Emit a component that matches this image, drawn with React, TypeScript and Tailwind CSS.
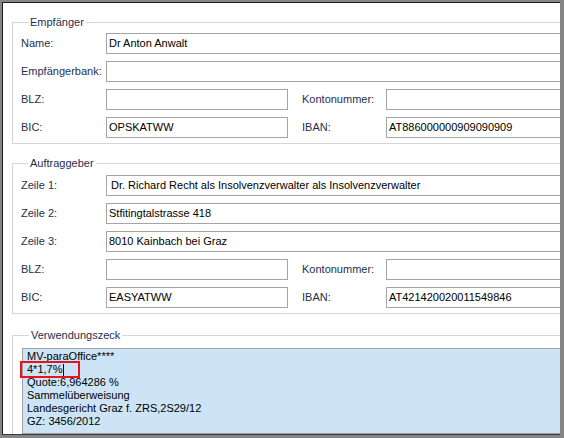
import React from "react";

const LABEL = "text-[#1e2f4d]";
const FONT = { fontFamily: "Tahoma, 'Liberation Sans', 'DejaVu Sans', sans-serif" };

function Box({ value = "", wide = false, lead = false }: { value?: string; wide?: boolean; lead?: boolean }) {
  return (
    <div
      className={`h-[21px] border border-[#a5a5a5] bg-white flex items-center text-black whitespace-nowrap overflow-hidden ${
        lead ? "pl-[4px]" : "pl-[2px]"
      } ${wide ? "flex-1" : "w-[182px]"}`}
    >
      {value}
    </div>
  );
}

function Row({ label, value, lead }: { label: string; value?: string; lead?: boolean }) {
  return (
    <div className="flex items-center h-[21px]">
      <div className={`w-[85px] ${LABEL}`}>{label}</div>
      <Box value={value} wide lead={lead} />
    </div>
  );
}

function SplitRow({ l1, v1, l2, v2 }: { l1: string; v1?: string; l2: string; v2?: string }) {
  return (
    <div className="flex items-center h-[21px]">
      <div className={`w-[85px] ${LABEL}`}>{l1}</div>
      <Box value={v1} />
      <div className={`w-[98px] pl-[14px] ${LABEL}`}>{l2}</div>
      <Box value={v2} wide />
    </div>
  );
}

export default function App() {
  return (
    <div
      className="w-[564px] h-[438px] bg-[#858585] pt-[2px] pl-[2px] pr-[4px] pb-[3px] text-[11px] leading-[13px]"
      style={FONT}
    >
      <div className="w-full h-full bg-white border-t border-l border-[#1c1c1c] border-b border-b-[#3a3a3a] overflow-hidden">
        <div className="w-[620px] pl-[9px] pt-[13px]">
          <fieldset className="border border-[#d5d5d5] pl-[8px] pt-[4px] pb-[5px]">
            <legend className={`ml-[7px] px-[2px] ${LABEL}`}>Empfänger</legend>
            <div className="flex flex-col gap-[7px]">
              <Row label="Name:" value="Dr Anton Anwalt" />
              <Row label="Empfängerbank:" />
              <SplitRow l1="BLZ:" l2="Kontonummer:" />
              <SplitRow l1="BIC:" v1="OPSKATWW" l2="IBAN:" v2="AT886000000909090909" />
            </div>
          </fieldset>

          <fieldset className="mt-[13px] border border-[#d5d5d5] pl-[8px] pt-[5px] pb-[5px]">
            <legend className={`ml-[7px] px-[2px] ${LABEL}`}>Auftraggeber</legend>
            <div className="flex flex-col gap-[7px]">
              <Row label="Zeile 1:" value="Dr. Richard Recht als Insolvenzverwalter als Insolvenzverwalter" lead />
              <Row label="Zeile 2:" value="Stfitingtalstrasse 418" />
              <Row label="Zeile 3:" value="8010 Kainbach bei Graz" />
              <SplitRow l1="BLZ:" l2="Kontonummer:" />
              <SplitRow l1="BIC:" v1="EASYATWW" l2="IBAN:" v2="AT421420020011549846" />
            </div>
          </fieldset>

          <fieldset className="mt-[15px] border border-[#d5d5d5] pl-[9px] pt-[6px] pb-[10px]">
            <legend className={`ml-[7px] px-[2px] ${LABEL}`}>Verwendungszeck</legend>
            <div className="relative h-[86px] border border-[#a0a0a0] bg-[#cde4f7] pl-[4px] pt-[1px] text-black">
              <div>MV-paraOffice****</div>
              <div className="flex items-center">
                <span>4*1,7%</span>
                <span className="ml-[1px] w-px h-[12px] bg-black" />
              </div>
              <div>Quote:6,964286 %</div>
              <div>Sammelüberweisung</div>
              <div>Landesgericht Graz f. ZRS,2S29/12</div>
              <div>GZ: 3456/2012</div>
              <div className="absolute left-[-3px] top-[12px] w-[60px] h-[17px] border-2 border-[#e8141b]" />
            </div>
          </fieldset>
        </div>
      </div>
    </div>
  );
}
